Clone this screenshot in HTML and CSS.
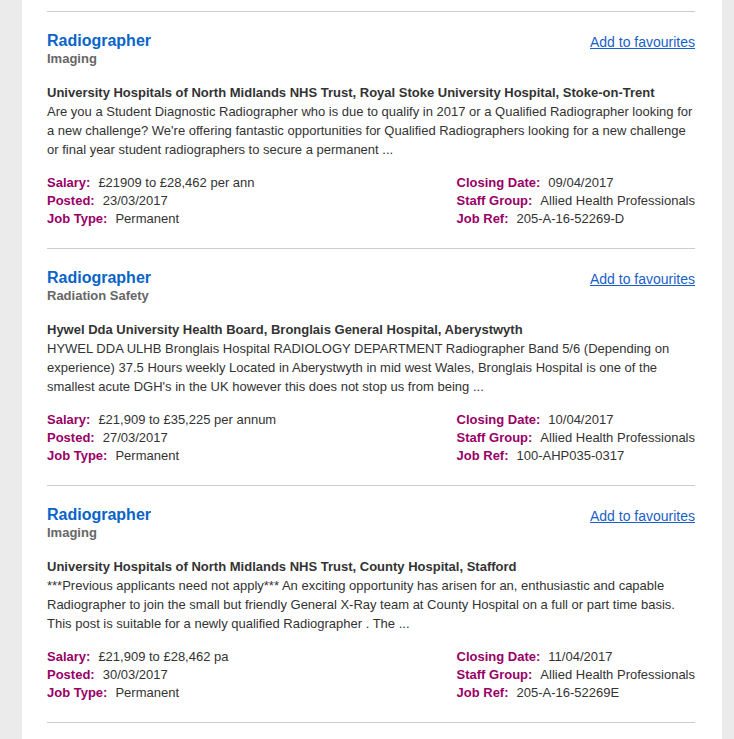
FILE: index.html
```html
<!DOCTYPE html>
<html lang="en">
<head>
    <meta charset="UTF-8">
    <title>Jobs</title>
    <link rel="stylesheet" href="styles.css">
</head>
<body>

<div class="page">
    <div class="results">

        <div class="job">
            <div class="job-head">
                <div>
                    <h3 class="job-title">Radiographer</h3>
                    <div class="job-spec">Imaging</div>
                </div>
                <a href="#" class="fav">Add to favourites</a>
            </div>
            <div class="employer">University Hospitals of North Midlands NHS Trust, Royal Stoke University Hospital, Stoke-on-Trent</div>
            <p class="desc">Are you a Student Diagnostic Radiographer who is due to qualify in 2017 or a Qualified Radiographer looking for a new challenge? We're offering fantastic opportunities for Qualified Radiographers looking for a new challenge or final year student radiographers to secure a permanent ...</p>
            <div class="meta">
                <ul>
                    <li><b>Salary:</b>£21909 to £28,462 per ann</li>
                    <li><b>Posted:</b>23/03/2017</li>
                    <li><b>Job Type:</b>Permanent</li>
                </ul>
                <ul>
                    <li><b>Closing Date:</b>09/04/2017</li>
                    <li><b>Staff Group:</b>Allied Health Professionals</li>
                    <li><b>Job Ref:</b>205-A-16-52269-D</li>
                </ul>
            </div>
        </div>

        <div class="job">
            <div class="job-head">
                <div>
                    <h3 class="job-title">Radiographer</h3>
                    <div class="job-spec">Radiation Safety</div>
                </div>
                <a href="#" class="fav">Add to favourites</a>
            </div>
            <div class="employer">Hywel Dda University Health Board, Bronglais General Hospital, Aberystwyth</div>
            <p class="desc">HYWEL DDA ULHB Bronglais Hospital RADIOLOGY DEPARTMENT Radiographer Band 5/6 (Depending on experience) 37.5 Hours weekly Located in Aberystwyth in mid west Wales, Bronglais Hospital is one of the smallest acute DGH's in the UK however this does not stop us from being ...</p>
            <div class="meta">
                <ul>
                    <li><b>Salary:</b>£21,909 to £35,225 per annum</li>
                    <li><b>Posted:</b>27/03/2017</li>
                    <li><b>Job Type:</b>Permanent</li>
                </ul>
                <ul>
                    <li><b>Closing Date:</b>10/04/2017</li>
                    <li><b>Staff Group:</b>Allied Health Professionals</li>
                    <li><b>Job Ref:</b>100-AHP035-0317</li>
                </ul>
            </div>
        </div>

        <div class="job">
            <div class="job-head">
                <div>
                    <h3 class="job-title">Radiographer</h3>
                    <div class="job-spec">Imaging</div>
                </div>
                <a href="#" class="fav">Add to favourites</a>
            </div>
            <div class="employer">University Hospitals of North Midlands NHS Trust, County Hospital, Stafford</div>
            <p class="desc">***Previous applicants need not apply*** An exciting opportunity has arisen for an, enthusiastic and capable Radiographer to join the small but friendly General X-Ray team at County Hospital on a full or part time basis. This post is suitable for a newly qualified Radiographer . The ...</p>
            <div class="meta">
                <ul>
                    <li><b>Salary:</b>£21,909 to £28,462 pa</li>
                    <li><b>Posted:</b>30/03/2017</li>
                    <li><b>Job Type:</b>Permanent</li>
                </ul>
                <ul>
                    <li><b>Closing Date:</b>11/04/2017</li>
                    <li><b>Staff Group:</b>Allied Health Professionals</li>
                    <li><b>Job Ref:</b>205-A-16-52269E</li>
                </ul>
            </div>
        </div>

    </div>
</div>

</body>
</html>
```

FILE: styles.css
```css
body {
    margin: 0;
    background-color: #ebebeb;
    font-family: Arial, "Liberation Sans", sans-serif;
    font-size: 13px;
    color: #333;
}
.page {
    width: 700px;
    margin-left: 22px;
    background: white;
    padding: 11px 27px 20px 25px;
    box-sizing: border-box;
    min-height: 739px;
}
.results {
    border-top: 1px solid #ccc;
}
.job {
    padding: 20px 0;
    border-bottom: 1px solid #ccc;
}
.job-head {
    display: flex;
    justify-content: space-between;
    align-items: flex-start;
}
.job-title {
    margin: 0;
    font-size: 16px;
    line-height: 18px;
    color: #0a64c8;
}
.job-spec {
    font-weight: bold;
    color: #666;
    line-height: 17px;
}
.fav {
    font-size: 14px;
    line-height: 18px;
    color: #1a5fc8;
    margin-top: 1px;
}
.employer {
    margin-top: 16px;
    font-weight: bold;
    line-height: 19px;
}
.desc {
    margin: 0;
    line-height: 19px;
}
.meta {
    display: flex;
    justify-content: space-between;
    margin-top: 15px;
}
.meta ul {
    list-style: none;
    margin: 0;
    padding: 0;
}
.meta li {
    line-height: 18px;
    white-space: nowrap;
}
.meta b {
    color: #990066;
    margin-right: 8px;
}
```
